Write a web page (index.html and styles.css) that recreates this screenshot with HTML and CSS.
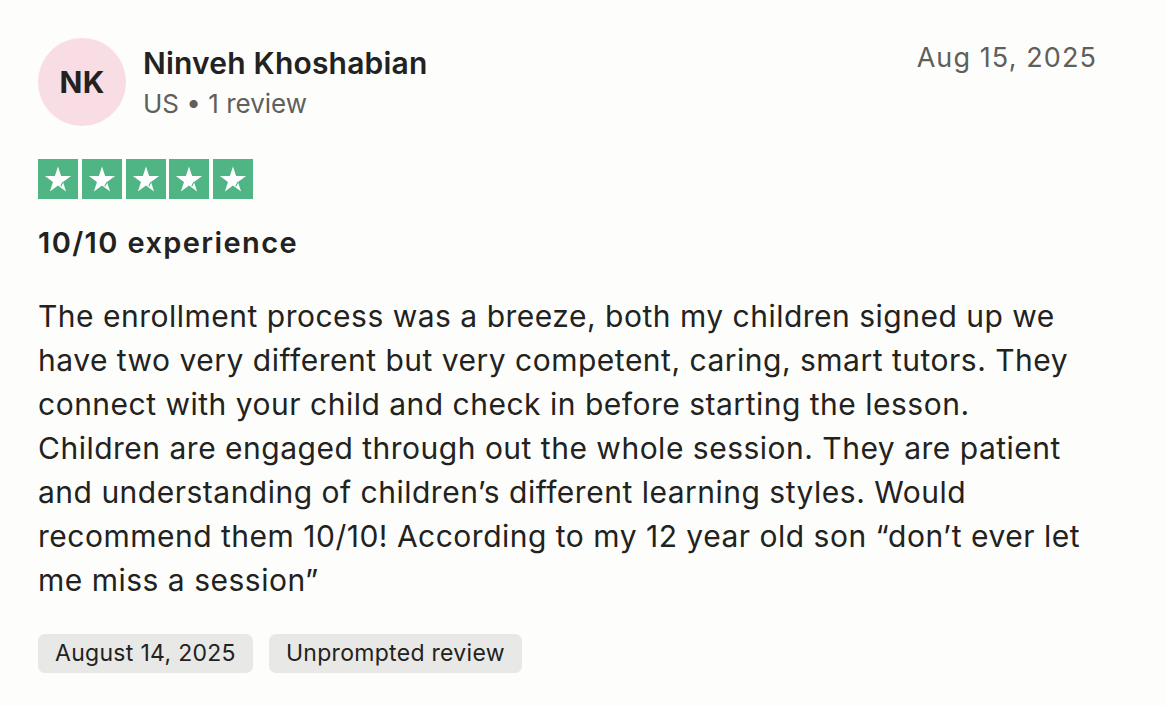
FILE: index.html
```html
<!DOCTYPE html>
<html lang="en">
<head>
<meta charset="utf-8">
<link rel="stylesheet" href="styles.css">
</head>
<body>
<article class="review">
  <header class="review-head">
    <div class="author">
      <div class="avatar">NK</div>
      <div class="author-info">
        <div class="author-name">Ninveh Khoshabian</div>
        <div class="author-meta">US • 1 review</div>
      </div>
    </div>
    <time class="posted">Aug 15, 2025</time>
  </header>
  <div class="stars">
    <span class="star"><svg viewBox="0 0 40 40"><path d="M20 7.5l3.1 9.5h10l-8.1 5.9 3.1 9.5-8.1-5.9-8.1 5.9 3.1-9.5-8.1-5.9h10z" fill="#fff"/><path d="M25 22.9l-2.2 4.4" stroke="#50b584" stroke-width="1.1"/></svg></span>
    <span class="star"><svg viewBox="0 0 40 40"><path d="M20 7.5l3.1 9.5h10l-8.1 5.9 3.1 9.5-8.1-5.9-8.1 5.9 3.1-9.5-8.1-5.9h10z" fill="#fff"/><path d="M25 22.9l-2.2 4.4" stroke="#50b584" stroke-width="1.1"/></svg></span>
    <span class="star"><svg viewBox="0 0 40 40"><path d="M20 7.5l3.1 9.5h10l-8.1 5.9 3.1 9.5-8.1-5.9-8.1 5.9 3.1-9.5-8.1-5.9h10z" fill="#fff"/><path d="M25 22.9l-2.2 4.4" stroke="#50b584" stroke-width="1.1"/></svg></span>
    <span class="star"><svg viewBox="0 0 40 40"><path d="M20 7.5l3.1 9.5h10l-8.1 5.9 3.1 9.5-8.1-5.9-8.1 5.9 3.1-9.5-8.1-5.9h10z" fill="#fff"/><path d="M25 22.9l-2.2 4.4" stroke="#50b584" stroke-width="1.1"/></svg></span>
    <span class="star"><svg viewBox="0 0 40 40"><path d="M20 7.5l3.1 9.5h10l-8.1 5.9 3.1 9.5-8.1-5.9-8.1 5.9 3.1-9.5-8.1-5.9h10z" fill="#fff"/><path d="M25 22.9l-2.2 4.4" stroke="#50b584" stroke-width="1.1"/></svg></span>
  </div>
  <h2 class="title">10/10 experience</h2>
  <p class="body">The enrollment process was a breeze, both my children signed up we have two very different but very competent, caring, smart tutors. They connect with your child and check in before starting the lesson. Children are engaged through out the whole session. They are patient and understanding of children’s different learning styles. Would recommend them 10/10! According to my 12 year old son “don’t ever let me miss a session”</p>
  <div class="tags">
    <span class="tag">August 14, 2025</span>
    <span class="tag">Unprompted review</span>
  </div>
</article>
</body>
</html>
```

FILE: styles.css
```css
* { box-sizing: border-box; }
html, body { margin: 0; padding: 0; }
body {
  background: #fdfdfb;
  color: #222220;
  font-family: Inter, "Liberation Sans", sans-serif;
  width: 1166px;
  height: 706px;
  overflow: hidden;
}
.review {
  padding: 38px 69px 0 38px;
}
.review-head {
  display: flex;
  justify-content: space-between;
  align-items: flex-start;
}
.author {
  display: flex;
  align-items: center;
  gap: 17px;
}
.avatar {
  width: 88px;
  height: 88px;
  border-radius: 50%;
  background: #f9dde5;
  display: flex;
  align-items: center;
  justify-content: center;
  font-size: 30px;
  font-weight: 700;
  color: #222220;
  letter-spacing: 0.3px;
}
.author-info {
  display: flex;
  flex-direction: column;
  gap: 4px;
}
.author-name {
  font-size: 30px;
  font-weight: 600;
  line-height: 40px;
  letter-spacing: 0.2px;
}
.author-meta {
  font-size: 26px;
  line-height: 34px;
  color: #5f5f5c;
}
.posted {
  font-size: 27px;
  line-height: 40px;
  color: #5f5f5c;
  letter-spacing: 1.1px;
}
.stars {
  display: flex;
  gap: 3.75px;
  margin-top: 33px;
}
.star {
  width: 40px;
  height: 40px;
  background: #50b584;
  display: block;
}
.star svg { display: block; width: 40px; height: 40px; }
.title {
  margin: 24px 0 0;
  font-size: 29px;
  font-weight: 600;
  line-height: 40px;
  letter-spacing: 1.4px;
}
.body {
  margin: 31px 0 0;
  max-width: 1052px;
  font-size: 30px;
  line-height: 44px;
  letter-spacing: 0.5px;
}
.tags {
  display: flex;
  gap: 16px;
  margin-top: 32px;
}
.tag {
  background: #e8e8e6;
  border-radius: 7px;
  padding: 0 17px;
  height: 39px;
  line-height: 39px;
  font-size: 23px;
  letter-spacing: 0.3px;
}
```
